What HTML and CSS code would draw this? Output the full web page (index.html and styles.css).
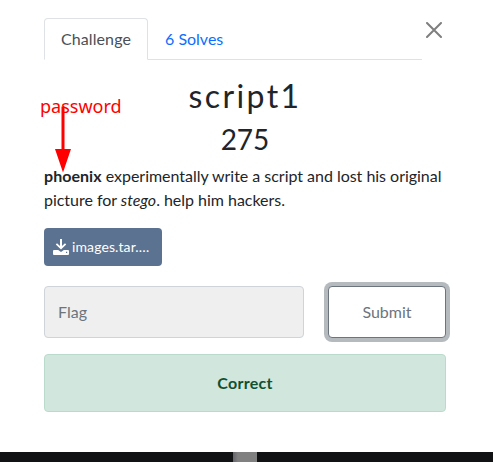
FILE: index.html
```html
<!DOCTYPE html>
<html lang="en">
<head>
<meta charset="utf-8">
<title>script1</title>
<link rel="stylesheet" href="styles.css">
</head>
<body>
<main class="modal">
  <button class="close" aria-label="Close"><svg viewBox="0 0 16 16" width="16" height="16"><path d="M1 1 15 15M15 1 1 15"/></svg></button>
  <nav class="tabs"><a class="tab active">Challenge</a><a class="tab">6 Solves</a></nav>
  <h2 class="name">script1</h2>
  <h3 class="value">275</h3>
  <p class="desc"><strong>phoenix</strong> experimentally write a script and lost his original picture for <em>stego</em>. help him hackers.</p>
  <a class="file"><svg viewBox="0 0 16 16" width="16" height="16"><path fill-rule="evenodd" d="M7 0h2v7l3-2.800 1.200 1.300L8 10.500 2.800 5.500 4 4.200 7 7zM1 11h4.200L8 13l2.800-2H15q1 0 1 1v3q0 1-1 1H1q-1 0-1-1v-3q0-1 1-1zM13 12.800v1.200h1.200v-1.200z"/></svg><span>images.tar.…</span></a>
  <div class="row"><input class="flag" placeholder="Flag"><button class="submit">Submit</button></div>
  <div class="alert"><strong>Correct</strong></div>
  <div class="note">password</div>
  <svg class="arrow" width="18" height="68" viewBox="0 0 18 68"><path d="M7.500 1.500h3V44H17L9 67.500 1 44h6.500z"/></svg>
</main>
<footer class="bar"><span class="thumb"></span></footer>
</body>
</html>
```
FILE: styles.css
```css
* { box-sizing: border-box; }
body { margin: 0; height: 462px; overflow: hidden; font: 16px/24px Lato, sans-serif; color: #212529; background: #fff; display: flex; flex-direction: column; }
.modal { position: relative; height: 452px; padding: 18px 47px 0 44px; }
.close { position: absolute; left: 426px; top: 22px; width: 16px; height: 16px; padding: 0; border: 0; background: none; }
.close svg { display: block; fill: none; stroke: #7f7f7f; stroke-width: 2; stroke-linecap: round; }
.tabs { display: flex; width: 378px; height: 42px; border-bottom: 1px solid #dee2e6; }
.tab { height: 42px; padding: 8px 16px; border: 1px solid transparent; color: #0d6efd; }
.active { width: 104px; color: #495057; background: #fff; border-color: #dee2e6 #dee2e6 #fff; border-radius: 4px 4px 0 0; letter-spacing: 0.09px; }
.name, .value { margin: 0; font-weight: 400; text-align: center; font-family: Lato, sans-serif; }
.name { margin-top: 16px; font-size: 32px; line-height: 40px; letter-spacing: 2.4px; }
.value { margin-top: 6px; font-size: 28px; line-height: 34px; }
.desc { margin: 8px 0 16px; width: 402px; letter-spacing: -0.025px; }
.desc strong { letter-spacing: 0.05px; }
.file { display: flex; align-items: center; gap: 3px; width: 118px; height: 38px; padding: 0 9px; border-radius: 4px; background: #5b7290; color: #fff; font-size: 14px; letter-spacing: 0.1px; white-space: nowrap; }
.file svg { fill: #fff; flex: none; }
.row { display: flex; justify-content: space-between; margin-top: 20px; width: 402px; height: 52px; }
.flag { width: 260px; padding: 0 13px; border: 1px solid #ced4da; border-radius: 4px; background: #efefef; font: inherit; }
.flag::placeholder { color: #6c757d; opacity: 1; }
.submit { width: 118px; border: 1px solid #6c757d; border-radius: 4px; background: #fff; color: #6c757d; font: inherit; box-shadow: 0 0 0 4px #b5babe; }
.alert { margin-top: 16px; width: 402px; height: 58px; padding: 16px; border: 1px solid #badbcc; border-radius: 4px; background: #d1e7dd; color: #0f5132; text-align: center; letter-spacing: 0.25px; }
.note { position: absolute; left: 40px; top: 94px; color: #f00; font: 18px/24px "Noto Sans", sans-serif; }
.arrow { position: absolute; left: 54px; top: 105px; fill: #f00; }
.bar { height: 10px; background: #111214; }
.thumb { display: block; margin-left: 233px; width: 24px; height: 10px; background: linear-gradient(90deg, #66666c, #808080 5px); }
```
